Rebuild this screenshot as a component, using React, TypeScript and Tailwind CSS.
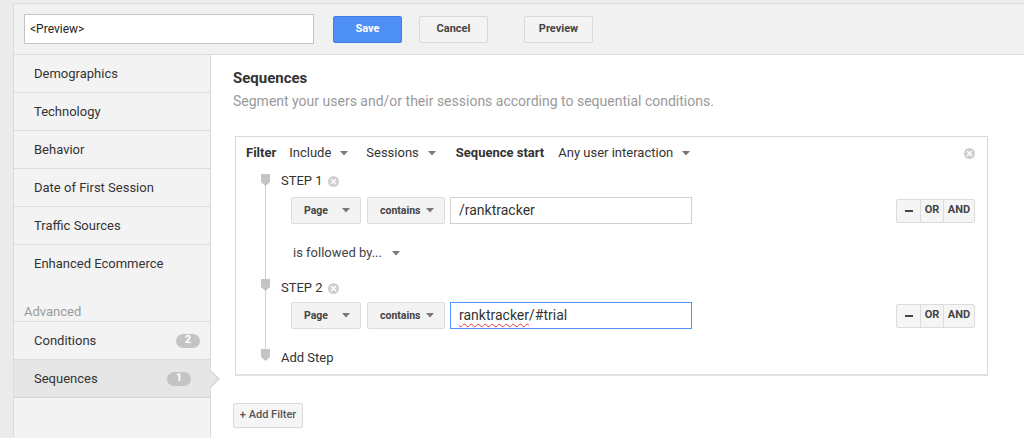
import React from "react";

const Caret = ({ className = "" }: { className?: string }) => (
  <svg width="8" height="5" viewBox="0 0 8 5" className={className}>
    <path d="M0 0 L8 0 L4 4.5 Z" fill="#777" />
  </svg>
);

const CloseCircle = ({ size = 11 }: { size?: number }) => (
  <svg width={size} height={size} viewBox="0 0 12 12">
    <circle cx="6" cy="6" r="6" fill="#cfcfcf" />
    <path d="M3.8 3.8 L8.2 8.2 M8.2 3.8 L3.8 8.2" stroke="#fff" strokeWidth="1.6" strokeLinecap="round" />
  </svg>
);

const Marker = () => (
  <svg width="9" height="12" viewBox="0 0 9 12">
    <path d="M0 0 H9 V8 L4.5 12 L0 8 Z" fill="#c4c4c4" />
  </svg>
);

const SideItem = ({ label, border = true }: { label: string; border?: boolean }) => (
  <div className={`h-[38px] flex items-center pl-5 text-[13px] text-[#333] ${border ? "border-b border-[#dcdcdc]" : ""}`}>
    {label}
  </div>
);

const Dropdown = ({ label, w }: { label: string; w: string }) => (
  <div className={`${w} h-[27px] flex items-center justify-between pl-[12px] pr-[10px] bg-[#f3f3f3] border border-[#dcdcdc] rounded-[2px] text-[10.5px] font-bold text-[#444]`}>
    <span>{label}</span>
    <Caret />
  </div>
);

const OpButtons = () => (
  <div className="flex h-[24px] border border-[#dcdcdc] bg-[#f5f5f5] text-[11px] font-bold text-[#444] rounded-[2px]">
    <div className="w-[24px] flex items-center justify-center border-r border-[#dcdcdc]">
      <span className="block w-[8px] h-[2px] bg-[#444]" />
    </div>
    <div className="w-[23px] flex items-center justify-center border-r border-[#dcdcdc]">OR</div>
    <div className="w-[30px] flex items-center justify-center">AND</div>
  </div>
);

export default function App() {
  return (
    <div
      className="w-[1024px] h-[438px] overflow-hidden bg-[#ebebeb] pt-[3px] pl-[13px]"
      style={{ fontFamily: "Roboto, 'Liberation Sans', Arial, sans-serif" }}
    >
      <div className="h-full flex flex-col border-l border-t border-[#dcdcdc] bg-white">
        {/* Top bar */}
        <div className="h-[51px] shrink-0 flex items-center bg-[#f1f1f1] border-b border-[#dcdcdc] pl-[10px]">
          <div className="w-[290px] h-[30px] bg-white border border-[#c4c4c4] flex items-center pl-[5px] text-[12px] text-[#222]">
            &lt;Preview&gt;
          </div>
          <div className="ml-[19px] w-[69px] h-[27px] rounded-[2px] bg-[#4d8ff5] border border-[#3f7fe6] flex items-center justify-center text-[11px] font-bold text-white">
            Save
          </div>
          <div className="ml-[17px] w-[69px] h-[27px] rounded-[2px] bg-[#f3f3f3] border border-[#d9d9d9] flex items-center justify-center text-[11px] font-bold text-[#444]">
            Cancel
          </div>
          <div className="ml-[36px] w-[69px] h-[27px] rounded-[2px] bg-[#f3f3f3] border border-[#d9d9d9] flex items-center justify-center text-[11px] font-bold text-[#444]">
            Preview
          </div>
        </div>

        <div className="flex flex-1 min-h-0">
          {/* Sidebar */}
          <div className="w-[197px] shrink-0 bg-[#f3f3f3] border-r border-[#dcdcdc] flex flex-col">
            <SideItem label="Demographics" />
            <SideItem label="Technology" />
            <SideItem label="Behavior" />
            <SideItem label="Date of First Session" />
            <SideItem label="Traffic Sources" />
            <SideItem label="Enhanced Ecommerce" border={false} />
            <div className="h-[39px] flex items-end pl-[10px] pb-0 border-b border-[#dcdcdc] text-[13px] text-[#9a9a9a]">
              Advanced
            </div>
            <div className="h-[38px] flex items-center justify-between pl-5 pr-[10px] border-b border-[#dcdcdc] text-[13px] text-[#333]">
              <span>Conditions</span>
              <span className="w-[24px] h-[14px] rounded-full bg-[#c4c4c4] text-white text-[11px] font-bold flex items-center justify-center">2</span>
            </div>
            <div className="relative h-[38px] flex items-center justify-between pl-5 pr-[19px] border-b border-[#d4d4d4] bg-[#e6e6e6] text-[13px] text-[#333]">
              <span>Sequences</span>
              <span className="w-[24px] h-[14px] rounded-full bg-[#c4c4c4] text-white text-[11px] font-bold flex items-center justify-center">1</span>
              <span className="absolute z-10 right-[-7px] top-[13px] w-[12px] h-[12px] rotate-45 bg-[#e6e6e6] border-t border-r border-[#cfcfcf]" />
            </div>
          </div>

          {/* Main */}
          <div className="flex-1 bg-white pl-[22px] pr-[36px] pt-[13px]">
            <div className="text-[15px] font-bold text-[#333] leading-[20px]">Sequences</div>
            <div className="mt-[3px] text-[14px] text-[#9a9a9a] leading-[20px]">
              Segment your users and/or their sessions according to sequential conditions.
            </div>

            <div className="mt-[25px] ml-[2px] border border-[#d9d9d9] border-b-2 border-b-[#e0e0e0] pl-[10px] pr-[12px] pt-[7px] pb-[6px]">
              {/* Filter row */}
              <div className="h-[18px] flex items-center text-[13px] text-[#333]">
                <span className="font-bold">Filter</span>
                <span className="ml-[13px]">Include</span>
                <Caret className="ml-[9px]" />
                <span className="ml-[18px]">Sessions</span>
                <Caret className="ml-[9px]" />
                <span className="ml-[20px] font-bold">Sequence start</span>
                <span className="ml-[14px]">Any user interaction</span>
                <Caret className="ml-[9px]" />
                <span className="ml-auto">
                  <CloseCircle size={11} />
                </span>
              </div>

              {/* Steps */}
              <div className="relative mt-[9px] pl-[35px]">
                <div className="absolute left-[19px] top-[10px] bottom-[10px] w-[1px] bg-[#cfcfcf]" />

                <div className="relative h-[20px] flex items-center text-[13px] text-[#333]">
                  <span className="absolute left-[-20px] top-[3px]"><Marker /></span>
                  <span>STEP 1</span>
                  <span className="ml-[5px]"><CloseCircle size={11} /></span>
                </div>

                <div className="mt-[6px] flex items-center pl-[10px]">
                  <Dropdown label="Page" w="w-[70px]" />
                  <div className="w-[6px]" />
                  <Dropdown label="contains" w="w-[78px]" />
                  <div className="ml-[5px] w-[242px] h-[27px] border border-[#d0d0d0] flex items-center pl-[8px] text-[14px] text-[#333]">
                    /ranktracker
                  </div>
                  <div className="ml-auto">
                    <OpButtons />
                  </div>
                </div>

                <div className="mt-[19px] h-[20px] flex items-center pl-[12px] text-[13px] text-[#444]">
                  <span>is followed by...</span>
                  <Caret className="ml-[10px]" />
                </div>

                <div className="relative mt-[15px] h-[20px] flex items-center text-[13px] text-[#333]">
                  <span className="absolute left-[-20px] top-[1px]"><Marker /></span>
                  <span>STEP 2</span>
                  <span className="ml-[5px]"><CloseCircle size={11} /></span>
                </div>

                <div className="mt-[4px] flex items-center pl-[10px]">
                  <Dropdown label="Page" w="w-[70px]" />
                  <div className="w-[6px]" />
                  <Dropdown label="contains" w="w-[78px]" />
                  <div className="ml-[5px] w-[242px] h-[27px] border border-[#4d90fe] flex items-center pl-[8px] text-[14px] text-[#333]">
                    <span className="underline decoration-wavy decoration-[#e53935] decoration-1 underline-offset-[3px]">ranktracker</span>
                    <span>/#trial</span>
                  </div>
                  <div className="ml-auto">
                    <OpButtons />
                  </div>
                </div>

                <div className="relative mt-[19px] h-[20px] flex items-center text-[13px] text-[#333]">
                  <span className="absolute left-[-20px] top-[1px]"><Marker /></span>
                  <span>Add Step</span>
                </div>
              </div>
            </div>

            <div className="mt-[27px] w-[70px] h-[25px] bg-[#f5f5f5] border border-[#d9d9d9] rounded-[2px] flex items-center justify-center text-[11px] text-[#555] font-medium">
              + Add Filter
            </div>
          </div>
        </div>
      </div>
    </div>
  );
}
